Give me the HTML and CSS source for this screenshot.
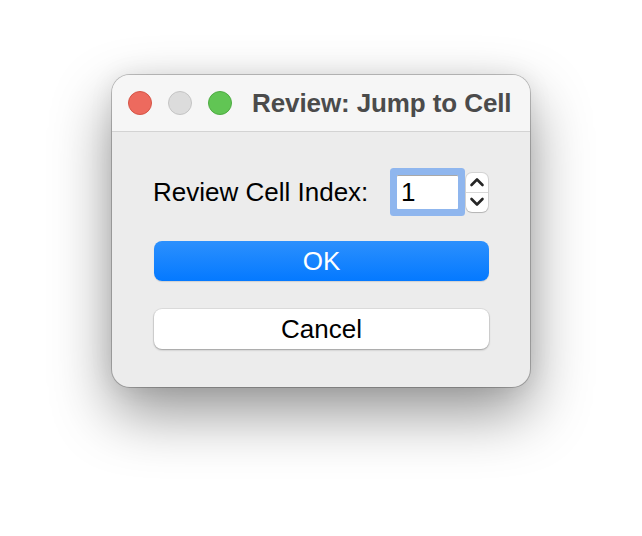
FILE: index.html
```html
<!DOCTYPE html>
<html>
<head>
<meta charset="utf-8">
<link rel="stylesheet" href="styles.css">
</head>
<body>
<div class="stage">
  <div class="window">
    <div class="titlebar">
      <div class="lights">
        <span class="light red"></span>
        <span class="light gray"></span>
        <span class="light green"></span>
      </div>
      <div class="title">Review: Jump to Cell</div>
    </div>
    <div class="content">
      <div class="row">
        <span class="label">Review Cell Index:</span>
        <div class="field">1</div>
        <div class="stepper">
          <div class="step">
            <svg width="16" height="10" viewBox="0 0 16 10"><path d="M2.5 8 L8 2.5 L13.5 8" fill="none" stroke="#262626" stroke-width="2.6" stroke-linecap="round" stroke-linejoin="round"/></svg>
          </div>
          <div class="step">
            <svg width="16" height="10" viewBox="0 0 16 10"><path d="M2.5 2 L8 7.5 L13.5 2" fill="none" stroke="#262626" stroke-width="2.6" stroke-linecap="round" stroke-linejoin="round"/></svg>
          </div>
        </div>
      </div>
      <button class="btn primary">OK</button>
      <button class="btn secondary">Cancel</button>
    </div>
  </div>
</div>
</body>
</html>
```
FILE: styles.css
```css
html, body {
  margin: 0;
  padding: 0;
  background: #ffffff;
}
body {
  font-family: "Liberation Sans", Arial, Helvetica, sans-serif;
  width: 642px;
  height: 536px;
  overflow: hidden;
}
.stage {
  padding: 75px 0 0 112px;
}
.window {
  width: 418px;
  height: 312px;
  border-radius: 18px;
  background: #ececec;
  box-shadow: 0 0 0 1px rgba(0,0,0,0.22), 0 26px 60px rgba(0,0,0,0.42), 0 0 24px rgba(0,0,0,0.08);
  overflow: hidden;
  display: flex;
  flex-direction: column;
}
.titlebar {
  height: 56px;
  flex: none;
  background: #f6f6f6;
  border-bottom: 1px solid #d3d3d3;
  display: flex;
  align-items: center;
  padding-left: 16px;
  gap: 20px;
}
.lights {
  display: flex;
  gap: 16px;
}
.light {
  width: 22px;
  height: 22px;
  border-radius: 50%;
  display: block;
}
.red {
  background: #ed6a5e;
  border: 1px solid #d55446;
}
.gray {
  background: #dcdcdc;
  border: 1px solid #c4c4c4;
}
.green {
  background: #61c554;
  border: 1px solid #4eab42;
}
.title {
  font-size: 26px;
  font-weight: bold;
  color: #4b4b4b;
  white-space: nowrap;
  letter-spacing: -0.1px;
}
.content {
  padding: 36px 42px 0 41px;
  display: flex;
  flex-direction: column;
}
.row {
  height: 48px;
  display: flex;
  align-items: center;
}
.label {
  font-size: 26px;
  color: #000;
  width: 244px;
  flex: none;
}
.field {
  width: 58px;
  height: 34px;
  padding-left: 4px;
  background: #fff;
  font-size: 26px;
  line-height: 34px;
  color: #000;
  border-radius: 1px;
  box-shadow: inset 0 1px 0 #a8a8a8, 0 0 0 7px #8fb6ee;
}
.stepper {
  margin-left: 8px;
  width: 23px;
  height: 39px;
  background: #fff;
  border-radius: 6px;
  box-shadow: 0 0 0 1px rgba(0,0,0,0.1), 0 1px 1px rgba(0,0,0,0.15);
  display: flex;
  flex-direction: column;
}
.step {
  flex: 1;
  display: flex;
  align-items: center;
  justify-content: center;
}
.step:first-child {
  border-bottom: 1px solid #d8d8d8;
}
.btn {
  font-family: "Liberation Sans", Arial, Helvetica, sans-serif;
  font-size: 26px;
  height: 40px;
  width: 335px;
  border: none;
  border-radius: 8px;
  padding: 0;
  margin-left: 1px;
}
.primary {
  margin-top: 25px;
  background: linear-gradient(#2c90fd, #0479ff);
  color: #fff;
  box-shadow: 0 1px 1px rgba(0,0,0,0.12);
}
.secondary {
  margin-top: 28px;
  background: #fff;
  color: #000;
  box-shadow: 0 0 0 1px rgba(0,0,0,0.06), 0 1px 2px rgba(0,0,0,0.3);
}
```
